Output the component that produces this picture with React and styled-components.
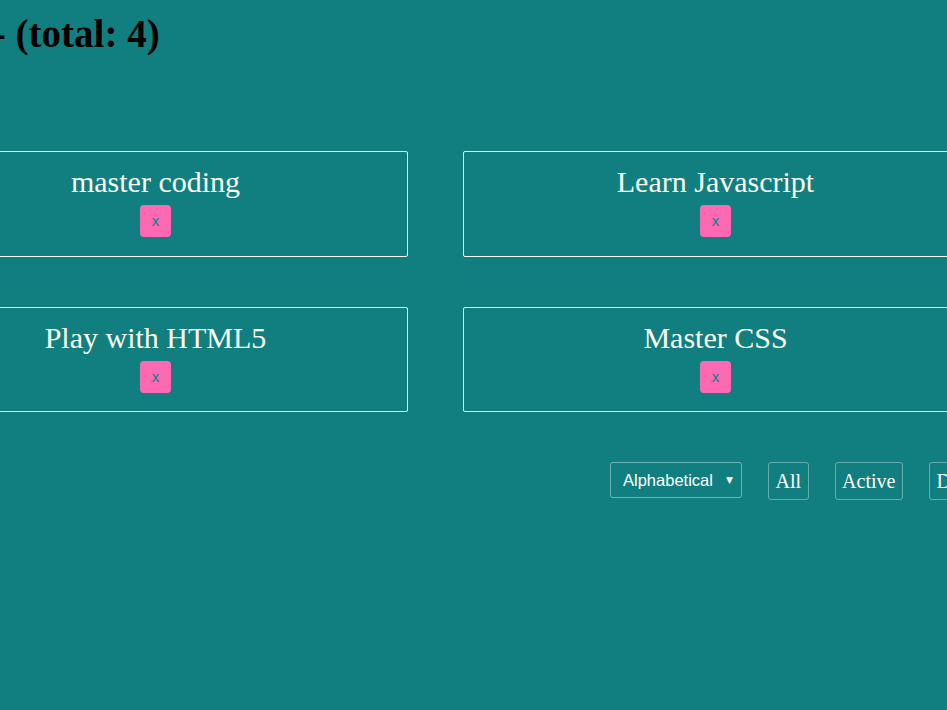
import React from "react";
import styled, { createGlobalStyle } from "styled-components";

const GlobalStyle = createGlobalStyle`
  html, body {
    margin: 0;
    padding: 0;
    background-color: #117f7f;
    overflow: hidden;
  }
  body {
    font-family: "Liberation Serif", "Times New Roman", serif;
    min-height: 710px;
  }
`;

const todos = [
  { id: 1, text: "master coding" },
  { id: 2, text: "Learn Javascript" },
  { id: 3, text: "Play with HTML5" },
  { id: 4, text: "Master CSS" },
];

const filters = ["All", "Active", "Done"];

function App() {
  return (
    <>
      <GlobalStyle />
      <Page>
        <Title>Todo - (total: {todos.length})</Title>
        <List>
          {todos.map((todo) => (
            <Card key={todo.id}>
              <CardText>{todo.text}</CardText>
              <RemoveButton>x</RemoveButton>
            </Card>
          ))}
        </List>
        <Filters>
          <SelectWrap>
            <Sort defaultValue="alpha">
              <option value="alpha">Alphabetical</option>
              <option value="date">Date</option>
            </Sort>
            <Arrow>▼</Arrow>
          </SelectWrap>
          {filters.map((f) => (
            <FilterButton key={f}>{f}</FilterButton>
          ))}
        </Filters>
      </Page>
    </>
  );
}

const Page = styled.div`
  width: 1065px;
  margin-left: -97px;
  display: flex;
  flex-direction: column;
`;

const Title = styled.h1`
  margin: 11px 0 0 -3px;
  font-size: 39px;
  line-height: 46px;
  font-weight: bold;
  color: #000;
  white-space: nowrap;
`;

const List = styled.div`
  display: grid;
  grid-template-columns: 505px 505px;
  column-gap: 55px;
  row-gap: 50px;
  margin-top: 94px;
`;

const Card = styled.div`
  height: 106px;
  box-sizing: border-box;
  border: 1px solid #ffffff;
  border-radius: 2px;
  padding: 13px 0 0;
  display: flex;
  flex-direction: column;
  align-items: center;
  &:nth-child(n + 3) {
    height: 105px;
  }
`;

const CardText = styled.div`
  font-size: 30px;
  line-height: 34px;
  color: #fbfbf0;
`;

const RemoveButton = styled.button`
  margin-top: 6px;
  width: 31px;
  height: 32px;
  padding: 0;
  border: none;
  border-radius: 4px;
  background-color: #ff69b4;
  color: #117f7f;
  font-family: "Liberation Sans", Arial, sans-serif;
  font-size: 15px;
  line-height: 30px;
  cursor: pointer;
`;

const Filters = styled.div`
  display: flex;
  align-items: flex-start;
  gap: 26px;
  margin-top: 50px;
  padding-left: 707px;
`;

const SelectWrap = styled.div`
  position: relative;
  display: flex;
`;

const Sort = styled.select`
  appearance: none;
  width: 132px;
  height: 36px;
  padding: 0 0 0 12px;
  border: 1px solid rgba(255, 255, 255, 0.4);
  border-radius: 3px;
  background: transparent;
  color: #ffffff;
  font-family: "Liberation Sans", Arial, sans-serif;
  font-size: 16.5px;
  outline: none;
`;

const Arrow = styled.span`
  position: absolute;
  right: 9px;
  top: 13px;
  font-family: "DejaVu Sans", sans-serif;
  font-size: 9px;
  color: #ffffff;
  pointer-events: none;
`;

const FilterButton = styled.button`
  height: 38px;
  padding: 0 6.5px;
  border: 1px solid rgba(255, 255, 255, 0.35);
  border-radius: 3px;
  background: transparent;
  color: #ffffff;
  font-family: "Liberation Serif", "Times New Roman", serif;
  font-size: 20px;
  cursor: pointer;
  white-space: nowrap;
`;

export default App;
